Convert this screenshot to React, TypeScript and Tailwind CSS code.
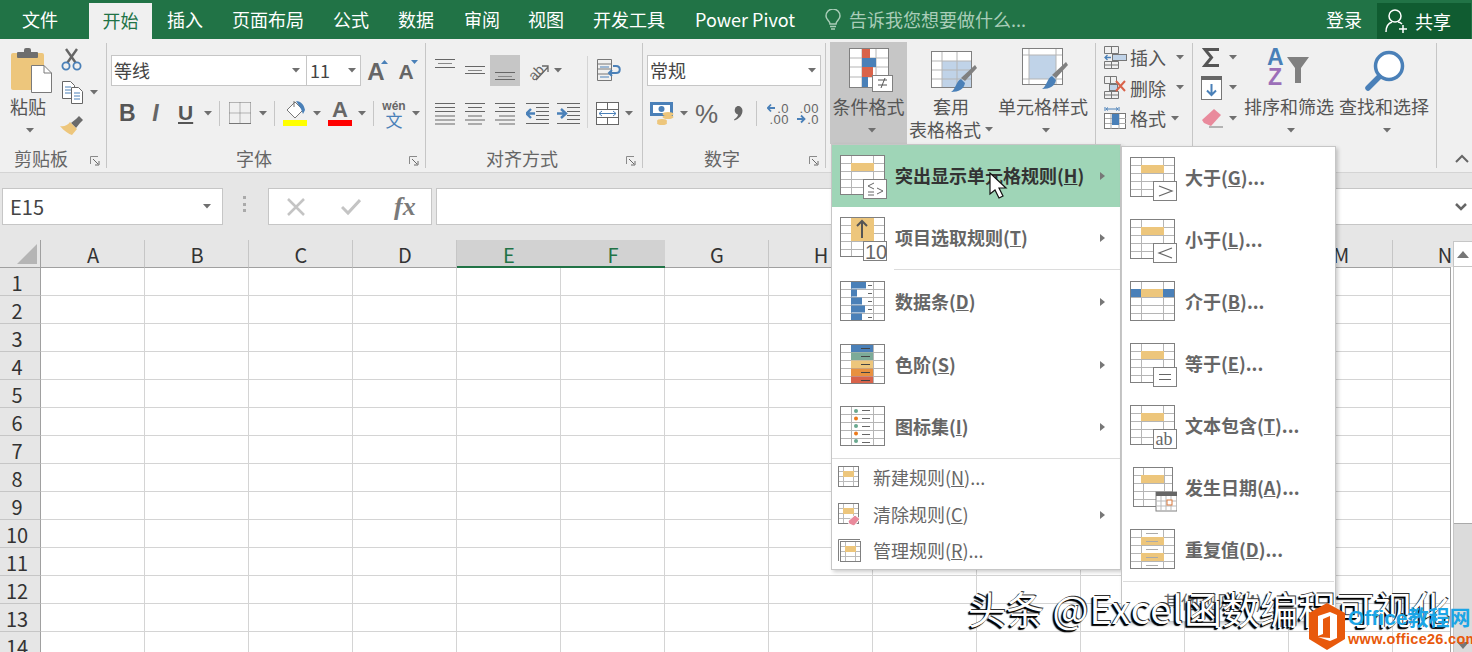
import React from "react";

const BLUE = "#4a80b8";
const YEL = "#edc67c";

function Caret({ className = "" }: { className?: string }) {
  return (
    <svg width="8" height="5" viewBox="0 0 8 5" className={`shrink-0 ${className}`}>
      <path d="M0 0h8L4 4.5z" fill="#6f6f6f" />
    </svg>
  );
}
function Launcher() {
  return (
    <svg width="10" height="10" viewBox="0 0 10 10">
      <path d="M.5 8V.5H8" fill="none" stroke="#8a8a8a" />
      <path d="M3 3l5 5M9 5v4H5" fill="none" stroke="#6a6a6a" />
    </svg>
  );
}
function Sep({ className = "" }: { className?: string }) {
  return <div className={`w-px h-[25px] bg-[#c6c6c6] shrink-0 ${className}`} />;
}

function Group({ w, label, children }: { w: string; label?: string; children: React.ReactNode }) {
  return (
    <div className={`${w} shrink-0 h-[125px] mt-[4px] border-r border-[#c6c6c6] flex flex-col`}>
      <div className="h-[107px] flex">{children}</div>
      {label && (
        <div className="h-[18px] -mt-px flex items-center">
          <div className="flex-1 text-center text-[18px] leading-[18px] text-[#666]">{label}</div>
          <div className="w-[24px] flex justify-end pr-[6px] pt-[5px]">
            <Launcher />
          </div>
        </div>
      )}
    </div>
  );
}

/* ---------- ribbon icons ---------- */
function PasteIcon() {
  return (
    <svg width="41" height="45" viewBox="0 0 41 45" className="ml-[11px] mt-[5px]">
      <rect x="0" y="5" width="33" height="37" rx="2" fill={YEL} />
      <rect x="6" y="4" width="21" height="6" rx="1" fill="#6e6e6e" />
      <rect x="13" y="0" width="7" height="6" rx="2" fill="#6e6e6e" />
      <path d="M20.5 17.5H33L40.5 25V44.5H20.5z" fill="#fff" stroke="#7a7a7a" />
      <path d="M33 17.5V25H40.5" fill="none" stroke="#7a7a7a" />
    </svg>
  );
}
function Scissors() {
  return (
    <svg width="21" height="23" viewBox="0 0 21 23">
      <path d="M5 1l9.5 13.5M16 1L6.5 14.5" stroke="#666" strokeWidth="2.4" fill="none" />
      <circle cx="5" cy="18" r="3.6" fill="none" stroke={BLUE} strokeWidth="1.8" />
      <circle cx="16" cy="18" r="3.6" fill="none" stroke={BLUE} strokeWidth="1.8" />
    </svg>
  );
}
function CopyIcon() {
  return (
    <svg width="21" height="23" viewBox="0 0 21 23">
      <path d="M.5.5h8l4 4v13H.5z" fill="#fff" stroke="#666" />
      <path d="M3 6h6M3 9h6M3 12h6" stroke={BLUE} />
      <path d="M9.5 6.5h7l4 4v12h-11z" fill="#fff" stroke="#666" />
      <path d="M12 12h6M12 15h6M12 18h6" stroke={BLUE} />
    </svg>
  );
}
function Brush() {
  return (
    <svg width="24" height="21" viewBox="0 0 24 21">
      <path d="M11 8l5-4 3-3 4 4-3 3-4 5z" fill="#6b6b6b" />
      <path d="M10 7l7 7-5 6c-3-1-8-4-12-9 4 1 8-1 10-4z" fill={YEL} />
    </svg>
  );
}
function GrowA({ up }: { up: boolean }) {
  return (
    <div className="relative w-[20px] h-[22px] flex items-end justify-center">
      <span className={`font-['Liberation_Sans'] font-bold text-[#666] leading-[20px] ${up ? "text-[24px]" : "text-[21px]"}`}>A</span>
      <svg width="7" height="4" viewBox="0 0 7 4" className="absolute right-[-2px] top-0">
        <path d={up ? "M0 4h7L3.5 0z" : "M0 0h7L3.5 4z"} fill={BLUE} />
      </svg>
    </div>
  );
}
function Borders() {
  return (
    <svg width="22" height="22" viewBox="0 0 22 22">
      <path d="M.5.5h21M.5.5v21M21.5.5v21M11 .5v21M.5 11h21" stroke="#777" strokeDasharray="1 1" fill="none" />
      <path d="M0 21.5h22" stroke="#777" />
    </svg>
  );
}
function FillIcon() {
  return (
    <svg width="24" height="26" viewBox="0 0 24 26">
      <path d="M4 10l8-8 8 8-8 8z" fill="#fff" stroke="#777" />
      <path d="M11 1v6" stroke="#777" />
      <path d="M13 1c4 0 8 3 9 9l-2 4-2-5z" fill={BLUE} />
      <rect x="0" y="20" width="24" height="6" fill="#ffff00" />
    </svg>
  );
}
function TableBig({ kind }: { kind: "cf" | "tb" | "cs" }) {
  if (kind === "cf")
    return (
      <svg width="45" height="45" viewBox="0 0 45 45">
        <rect x=".5" y=".5" width="39" height="39" fill="#fff" stroke="#808080" />
        <path d="M13 1v38M27 1v38M1 10h38M1 19h38M1 29h38" stroke="#b5b5b5" />
        <rect x="13" y="1" width="8" height="9" fill="#d9634a" />
        <rect x="13" y="10" width="14" height="9" fill={BLUE} />
        <rect x="13" y="19" width="11" height="10" fill="#d9634a" />
        <rect x="13" y="29" width="6" height="10" fill={BLUE} />
        <rect x="23.5" y="27.5" width="20" height="16" fill="#fff" stroke="#808080" />
        <path d="M29 32h9M29 37h9M36 30l-4 10" stroke="#555" fill="none" />
      </svg>
    );
  if (kind === "tb")
    return (
      <svg width="46" height="42" viewBox="0 0 46 42">
        <rect x=".5" y=".5" width="40" height="36" fill="#fff" stroke="#808080" />
        <rect x="11" y="10" width="29" height="26" fill="#c0d3e8" />
        <path d="M11 1v35M26 1v35M1 10h39M1 19h39M1 28h39" stroke="#b5b5b5" />
        <path d="M44 14l2 3-12 13-4-3z" fill="#808080" />
        <path d="M30 28l4 4c-1 6-6 9-14 9 5-3 5-11 10-13z" fill={BLUE} />
      </svg>
    );
  return (
    <svg width="46" height="42" viewBox="0 0 46 42">
      <rect x=".5" y=".5" width="40" height="36" fill="#fff" stroke="#808080" />
      <rect x="7" y="7" width="27" height="24" fill="#c0d3e8" />
      <path d="M7 1v35M34 1v35M1 7h39M1 31h39" stroke="#b5b5b5" />
      <path d="M44 14l2 3-12 13-4-3z" fill="#808080" />
      <path d="M30 28l4 4c-1 6-6 9-14 9 5-3 5-11 10-13z" fill={BLUE} />
    </svg>
  );
}
function InsertIcon() {
  return (
    <svg width="23" height="23" viewBox="0 0 23 23">
      <path d="M.5.5h14v7H.5zM7.5.5v7M.5 15.5h14v7H.5zM7.5 15.5v7M.5 19h14" fill="none" stroke="#777" />
      <rect x="8.5" y="8.5" width="14" height="6" fill="#c0d3e8" stroke="#777" />
      <path d="M7 11.5H1M3.5 9L1 11.5 3.5 14" stroke={BLUE} fill="none" strokeWidth="1.3" />
    </svg>
  );
}
function DeleteIcon() {
  return (
    <svg width="23" height="23" viewBox="0 0 23 23">
      <path d="M.5.5h12v7H.5zM6.5.5v7M.5 15.5h14v7H.5zM7.5 15.5v7M.5 19h14" fill="none" stroke="#777" />
      <rect x="5.5" y="8.5" width="8" height="6" fill="#c0d3e8" stroke="#777" />
      <path d="M12 5l9 10M21 5l-9 10" stroke="#d9634a" strokeWidth="2" />
    </svg>
  );
}
function FormatIcon() {
  return (
    <svg width="23" height="24" viewBox="0 0 23 24">
      <path d="M1 1v4M15 1v4M3 3h10M4 1.5L2 3l2 1.5M12 1.5L14 3l-2 1.5" fill="none" stroke={BLUE} />
      <rect x=".5" y="7.5" width="21" height="15" fill="#fff" stroke="#777" />
      <path d="M7 8v15M15 8v15M1 12.5h21M1 17.5h21" stroke="#aaa" />
      <rect x="8" y="8" width="7" height="11" fill={BLUE} />
    </svg>
  );
}
function SigmaIcon() {
  return (
    <svg width="18" height="19" viewBox="0 0 18 19">
      <path d="M17 1.500H3l6.500 8L3 17.500h14" fill="none" stroke="#555" strokeWidth="3" />
    </svg>
  );
}
function FillDown() {
  return (
    <svg width="21" height="24" viewBox="0 0 21 24">
      <rect x=".5" y=".5" width="20" height="23" fill="#fff" stroke="#777" />
      <rect x="0" y="0" width="21" height="4" fill="#666" />
      <path d="M10.5 8v11M6 14.5l4.5 4.5 4.5-4.5" fill="none" stroke={BLUE} strokeWidth="2" />
    </svg>
  );
}
function Eraser() {
  return (
    <svg width="22" height="20" viewBox="0 0 22 20">
      <path d="M13 1l7 6-10 11-7-3-2-3z" fill="#e98a9c" />
      <path d="M8 19h14" stroke="#777" />
    </svg>
  );
}
function SortIcon() {
  return (
    <svg width="44" height="40" viewBox="0 0 44 40">
      <text x="0" y="19" fontSize="23" fontWeight="700" fill={BLUE} fontFamily="Liberation Sans">A</text>
      <text x="1" y="39" fontSize="23" fontWeight="700" fill="#9c6fb8" fontFamily="Liberation Sans">Z</text>
      <path d="M20 11h22l-8 11v15h-6V22z" fill="#808080" />
    </svg>
  );
}
function FindIcon() {
  return (
    <svg width="40" height="42" viewBox="0 0 40 42">
      <circle cx="24" cy="16" r="13.500" fill="#fff" stroke={BLUE} strokeWidth="3.500" />
      <path d="M14 27L3 38" stroke={BLUE} strokeWidth="5.500" strokeLinecap="round" />
    </svg>
  );
}
function AlignV({ ys }: { ys: number[] }) {
  return (
    <svg width="20" height="31" viewBox="0 0 20 31">
      {ys.map((y) => (
        <path key={y} d={`M0 ${y}.5h20`} stroke="#666" />
      ))}
      <path d={`M3 ${ys[0] + 4}.5h14`} stroke="#888" />
    </svg>
  );
}
function AlignH({ xs }: { xs: [number, number][] }) {
  return (
    <svg width="20" height="22" viewBox="0 0 20 22">
      {xs.map(([a, b], i) => (
        <path key={i} d={`M${a} ${i * 4 + 0.5 + (i > 2 ? 0.5 : 0)}H${b}`} stroke="#666" />
      ))}
    </svg>
  );
}
function Indent({ right }: { right: boolean }) {
  return (
    <svg width="23" height="22" viewBox="0 0 23 22">
      <path d="M0 .5h23M10 4.500h13M10 8.500h13M10 12.500h13M10 16.500h13M0 20.500h23" stroke="#666" />
      {right ? (
        <path d="M0 10.500h7M4 6l5 4.500L4 15" fill="none" stroke={BLUE} strokeWidth="2.400" />
      ) : (
        <path d="M9 10.500H2M5 6L0.500 10.500 5 15" fill="none" stroke={BLUE} strokeWidth="2.400" />
      )}
    </svg>
  );
}
function Orientation() {
  return (
    <svg width="21" height="20" viewBox="0 0 21 20">
      <text x="-1" y="16" fontSize="14" fill="#666" fontFamily="Liberation Sans" transform="rotate(-45 8 10)">ab</text>
      <path d="M8 19L20 6M14 5h6v6" fill="none" stroke="#666" strokeWidth="1.300" />
    </svg>
  );
}
function WrapIcon() {
  return (
    <svg width="24" height="22" viewBox="0 0 24 22">
      <path d="M.5.5h14v21H.5zM.5 5h14M.5 10h14M.5 15h14" fill="none" stroke="#777" />
      <path d="M3 8h9M3 18h9" stroke={BLUE} />
      <path d="M16 7h3c5 0 5 7 0 7h-7M15 11l-3 3 3 3" fill="none" stroke={BLUE} strokeWidth="2" />
    </svg>
  );
}
function MergeIcon() {
  return (
    <svg width="23" height="23" viewBox="0 0 23 23">
      <rect x=".5" y=".5" width="22" height="22" fill="#fff" stroke="#666" />
      <path d="M1 7.500h21M1 15.500h21M11.500 1v6M11.500 16v6" stroke="#666" />
      <path d="M3 11.500h17M6 9l-3 2.500L6 14M17 9l3 2.500L17 14" fill="none" stroke={BLUE} />
    </svg>
  );
}
function Currency() {
  return (
    <svg width="24" height="23" viewBox="0 0 24 23">
      <rect x="0" y="0" width="23" height="14" fill={BLUE} />
      <rect x="3" y="3" width="17" height="8" fill="#fff" />
      <circle cx="11.500" cy="7" r="3" fill={BLUE} />
      <ellipse cx="18" cy="12" rx="5.500" ry="2" fill={YEL} />
      <ellipse cx="18" cy="15" rx="5.500" ry="2" fill={YEL} />
      <ellipse cx="12" cy="19" rx="5" ry="2" fill={YEL} />
      <ellipse cx="12" cy="21" rx="5" ry="2" fill={YEL} />
    </svg>
  );
}
function CommaIcon() {
  return (
    <svg width="10" height="15" viewBox="0 0 10 15">
      <path d="M4.500 0a4.500 4.500 0 0 1 5 4.500c0 4.500-3.500 8.500-8 10l-.5-1c2.500-1.500 4-3.500 4-5A4.500 4.500 0 0 1 4.500 0z" fill="#666" />
    </svg>
  );
}
function DecIcon({ inc }: { inc: boolean }) {
  const arrow = inc ? (
    <path d="M1 5h7M4 1.500L.8 5 4 8.500" fill="none" stroke={BLUE} strokeWidth="1.800" />
  ) : (
    <path d="M0 5h7M4 1.500L7.500 5 4 8.500" fill="none" stroke={BLUE} strokeWidth="1.800" />
  );
  return inc ? (
    <div className="w-[24px] h-[22px] flex flex-col text-[13px] leading-[11px] text-[#666] font-['Liberation_Sans'] tracking-[0.5px]">
      <div className="flex items-center justify-end gap-[1px]">
        <svg width="9" height="10" viewBox="0 0 9 10">{arrow}</svg>
        <span>.0</span>
      </div>
      <div className="text-right">.00</div>
    </div>
  ) : (
    <div className="w-[24px] h-[22px] flex flex-col text-[13px] leading-[11px] text-[#666] font-['Liberation_Sans'] tracking-[0.5px]">
      <div className="text-right">.00</div>
      <div className="flex items-center justify-end gap-[1px]">
        <svg width="9" height="10" viewBox="0 0 9 10">{arrow}</svg>
        <span>.0</span>
      </div>
    </div>
  );
}

/* ---------- conditional-format menu icons ---------- */
function CfIcon({ x = 0, w = 45, cols = [11, 33], children, badge }: { x?: number; w?: number; cols?: number[]; children?: React.ReactNode; badge?: React.ReactNode }) {
  const y = 3;
  return (
    <svg width="47" height="48" viewBox="0 0 47 48" className="shrink-0">
      <rect x={x + 0.5} y={y + 0.5} width={w - 1} height="39" fill="#fff" />
      {cols.map((c) => (
        <path key={c} d={`M${x + c}.5 ${y}v40`} stroke="#b5b5b5" />
      ))}
      {[8, 16, 24, 32].map((r) => (
        <path key={r} d={`M${x} ${y + r}.5h${w}`} stroke="#b5b5b5" />
      ))}
      <g transform={`translate(${x} ${y})`}>{children}</g>
      <rect x={x + 0.5} y={y + 0.5} width={w - 1} height="39" fill="none" stroke="#808080" />
      {badge}
    </svg>
  );
}
function Badge({ children }: { children?: React.ReactNode }) {
  return (
    <g>
      <rect x="23.500" y="27.500" width="23" height="19" fill="#fff" stroke="#808080" />
      {children}
    </g>
  );
}
const Y = ({ y = 8, h = 8, x = 11, w = 23 }: { y?: number; h?: number; x?: number; w?: number }) => <rect x={x} y={y} width={w} height={h} fill={YEL} />;

function DataBars() {
  const ws = [15, 6, 11, 14, 11];
  return (
    <CfIcon>
      {ws.map((w, i) => (
        <React.Fragment key={i}>
          <rect x="11" y={i * 8 + 0.5} width={w} height="7" fill={BLUE} />
          <path d={`M28 ${i * 8 + 4}.5h4`} stroke="#666" />
        </React.Fragment>
      ))}
    </CfIcon>
  );
}
function ColorScale() {
  const cs = [BLUE, "#7cab98", YEL, "#e8913f", "#d9634a"];
  return (
    <CfIcon>
      {cs.map((c, i) => (
        <React.Fragment key={i}>
          <rect x="11" y={i * 8 + 0.5} width="22" height="7.500" fill={c} />
          <path d={`M21 ${i * 8 + 4}.5h9`} stroke="#444" />
        </React.Fragment>
      ))}
    </CfIcon>
  );
}
function IconSets() {
  const cs = ["#6aa88f", "#ec7a1c", "#6aa88f", "#ec7a1c", "#6aa88f"];
  return (
    <CfIcon>
      {cs.map((c, i) => (
        <React.Fragment key={i}>
          <circle cx="16" cy={i * 7.500 + 5} r="2" fill={c} />
          <path d={`M22 ${i * 8 + 4}.5h8`} stroke="#666" />
        </React.Fragment>
      ))}
    </CfIcon>
  );
}
function SmallCf({ kind }: { kind: "new" | "clear" | "manage" }) {
  return (
    <svg width="23" height="23" viewBox="0 0 23 23" className="shrink-0">
      {kind === "manage" && <path d="M.5 22V.5H22" fill="none" stroke="#808080" />}
      <g transform={kind === "manage" ? "translate(2 2)" : ""}>
        <rect x=".5" y=".5" width="20" height="20" fill="#fff" stroke="#808080" />
        <path d="M5.500 1v19M15.500 1v19M1 5.500h19M1 10.500h19M1 15.500h19" stroke="#bbb" />
        <rect x="5" y="5" width="11" height="6" fill={YEL} />
      </g>
      {kind === "clear" && <path d="M17 12l5 4-6 7-5-2-1-3z" fill="#e98a9c" stroke="#fff" />}
    </svg>
  );
}

function MenuRow({ icon, label, hot, arrow, height }: { icon: React.ReactNode; label: React.ReactNode; hot?: boolean; arrow?: boolean; height: string }) {
  return (
    <div className={`${height} flex items-center ${hot ? "bg-[#9fd5b7] text-[#333]" : "text-[#666]"}`}>
      <div className="ml-[8px] w-[47px] shrink-0 flex">{icon}</div>
      <div className="ml-[8px] -mt-[2px] flex-1 text-[18px] font-bold leading-[24px] whitespace-nowrap">{label}</div>
      {arrow && (
        <svg width="5" height="8" viewBox="0 0 5 8" className="mr-[15px]">
          <path d="M0 0l5 4-5 4z" fill="#777" />
        </svg>
      )}
    </div>
  );
}
function SmallRow({ kind, label, arrow, height }: { kind: "new" | "clear" | "manage"; label: React.ReactNode; arrow?: boolean; height: string }) {
  return (
    <div className={`${height} flex items-center text-[#666]`}>
      <div className="ml-[6px] w-[23px] shrink-0 flex">
        <SmallCf kind={kind} />
      </div>
      <div className="ml-[12px] -mt-[2px] flex-1 text-[18px] leading-[24px] whitespace-nowrap">{label}</div>
      {arrow && (
        <svg width="5" height="8" viewBox="0 0 5 8" className="mr-[15px]">
          <path d="M0 0l5 4-5 4z" fill="#777" />
        </svg>
      )}
    </div>
  );
}
function SubRow({ icon, label }: { icon: React.ReactNode; label: React.ReactNode }) {
  return <MenuRow icon={icon} label={label} height="h-[62px]" />;
}

const COLS = ["A", "B", "C", "D", "E", "F", "G", "H", "I", "J", "K", "L", "M", "N"];
const ROWS = Array.from({ length: 14 }, (_, i) => i + 1);

export default function App() {
  return (
    <div className="relative w-[1472px] h-[652px] overflow-hidden bg-white font-['Noto_Sans_CJK_SC','Noto_Sans',sans-serif] text-[#555]">
      {/* Title tabs */}
      <div className="h-[39px] bg-[#217346] flex items-end text-white text-[18px]">
        <div className="ml-[22px] w-[36px] h-[39px] leading-[39px]">文件</div>
        <div className="ml-[31px] w-[63px] h-[36px] leading-[34px] text-center bg-[#f0f0f0] text-[#217346]">开始</div>
        <div className="ml-[15px] h-[39px] leading-[39px]">插入</div>
        <div className="ml-[29px] h-[39px] leading-[39px]">页面布局</div>
        <div className="ml-[29px] h-[39px] leading-[39px]">公式</div>
        <div className="ml-[29px] h-[39px] leading-[39px]">数据</div>
        <div className="ml-[30px] h-[39px] leading-[39px]">审阅</div>
        <div className="ml-[28px] h-[39px] leading-[39px]">视图</div>
        <div className="ml-[29px] h-[39px] leading-[39px]">开发工具</div>
        <div className="ml-[30px] w-[100px] h-[39px] leading-[39px] whitespace-nowrap">Power Pivot</div>
        <div className="ml-[30px] h-[39px] flex items-center">
          <svg width="16" height="22" viewBox="0 0 16 22">
            <path d="M5 15c0-3-4-4-4-8a7 7 0 0 1 14 0c0 4-4 5-4 8z" fill="none" stroke="#a9cdb8" strokeWidth="1.500" />
            <path d="M5 17.500h6M6 20h4" stroke="#a9cdb8" strokeWidth="1.500" />
          </svg>
        </div>
        <div className="ml-[8px] w-[176px] h-[39px] leading-[39px] text-[#a9cdb8] whitespace-nowrap">告诉我您想要做什么...</div>
        <div className="ml-[301px] h-[39px] leading-[39px]">登录</div>
        <div className="ml-[15px] w-[94px] h-[36px] bg-[#105c31] flex items-center">
          <svg width="24" height="25" viewBox="0 0 24 25" className="ml-[8px]">
            <circle cx="10" cy="7" r="6" fill="none" stroke="#fff" strokeWidth="1.500" />
            <path d="M1 23c0-6 3-9 6-10M13 13c1 0 3 1 4 2M18 16v8M14 20h8" fill="none" stroke="#fff" strokeWidth="1.500" />
          </svg>
          <span className="ml-[6px] leading-[30px]">共享</span>
        </div>
      </div>

      {/* Ribbon */}
      <div className="h-[134px] bg-[#f0f0f0] border-b border-[#d4d4d4] flex items-start">
        <Group w="w-[107px]" label="剪贴板">
          <div className="w-[56px] flex flex-col items-start">
            <PasteIcon />
            <div className="ml-[10px] mt-[2px] text-[18px] leading-[22px]">粘贴</div>
            <Caret className="ml-[26px] mt-[11px]" />
          </div>
          <div className="flex flex-col items-start">
            <div className="ml-[5px] mt-[5px]"><Scissors /></div>
            <div className="mt-[10px] ml-[6px] flex items-center">
              <CopyIcon />
              <Caret className="ml-[7px]" />
            </div>
            <div className="ml-[4px] mt-[11px]"><Brush /></div>
          </div>
        </Group>

        <Group w="w-[319px]" label="字体">
          <div className="flex flex-col">
            <div className="mt-[12px] ml-[4px] flex items-center">
              <div className="w-[196px] h-[31px] bg-white border border-[#c6c6c6] flex items-center justify-between pl-[2px] pr-[6px] text-[18px] text-[#444]">
                <span>等线</span>
                <Caret />
              </div>
              <div className="w-[55px] h-[31px] bg-white border border-[#c6c6c6] -ml-px flex items-center justify-between pl-[3px] pr-[4px] text-[18px] text-[#444]">
                <span>11</span>
                <Caret />
              </div>
              <div className="ml-[5px]"><GrowA up /></div>
              <div className="ml-[10px]"><GrowA up={false} /></div>
            </div>
            <div className="mt-[14px] h-[26px] flex items-center font-['Liberation_Sans'] text-[#555]">
              <div className="ml-[12px] w-[14px] text-center text-[23px] leading-[24px] font-bold">B</div>
              <div className="ml-[17px] w-[11px] text-center text-[23px] leading-[24px] italic font-bold text-[#666]">I</div>
              <div className="ml-[17px] w-[14px] text-center text-[21px] leading-[24px] font-bold underline underline-offset-2">U</div>
              <Caret className="ml-[12px]" />
              <Sep className="ml-[7px]" />
              <div className="ml-[9px]"><Borders /></div>
              <Caret className="ml-[8px]" />
              <Sep className="ml-[7px]" />
              <div className="ml-[8px]"><FillIcon /></div>
              <Caret className="ml-[6px]" />
              <div className="ml-[7px] w-[24px] h-[26px] flex flex-col items-center">
                <span className="text-[22px] leading-[20px] font-bold text-[#666]">A</span>
                <span className="w-[24px] h-[6px] bg-[#ff0000]" />
              </div>
              <Caret className="ml-[6px]" />
              <Sep className="ml-[7px]" />
              <div className="ml-[10px] w-[20px] h-[26px] flex flex-col items-center">
                <span className="text-[12px] leading-[12px] font-bold text-[#666]">wén</span>
                <span className="text-[17px] leading-[16px] text-[#4a80b8] font-['Noto_Sans_CJK_SC']">文</span>
              </div>
              <Caret className="ml-[8px]" />
            </div>
          </div>
        </Group>

        <Group w="w-[217px]" label="对齐方式">
          <div className="w-[161px] flex flex-col">
            <div className="mt-[12px] h-[31px] flex items-center">
              <div className="ml-[9px]"><AlignV ys={[4, 12]} /></div>
              <div className="ml-[10px]"><AlignV ys={[11, 18]} /></div>
              <div className="ml-[5px] w-[30px] h-[31px] bg-[#c6c6c6] flex justify-center"><AlignV ys={[17, 24]} /></div>
              <div className="ml-[8px]"><Orientation /></div>
              <Caret className="ml-[5px]" />
            </div>
            <div className="mt-[17px] h-[22px] flex items-center">
              <div className="ml-[9px]"><AlignH xs={[[0, 20], [0, 20], [0, 20], [0, 20], [0, 20], [0, 20]]} /></div>
              <div className="ml-[10px]"><AlignH xs={[[0, 20], [3, 17], [0, 20], [3, 17], [0, 20], [3, 17]]} /></div>
              <div className="ml-[10px]"><AlignH xs={[[0, 20], [4, 20], [0, 20], [4, 20], [0, 20], [4, 20]]} /></div>
              <div className="ml-[11px]"><Indent right={false} /></div>
              <div className="ml-[8px]"><Indent right /></div>
            </div>
          </div>
          <div className="w-px h-[72px] mt-[13px] bg-[#d4d4d4]" />
          <div className="flex flex-col">
            <div className="ml-[9px] mt-[16px]"><WrapIcon /></div>
            <div className="ml-[8px] mt-[21px] flex items-center">
              <MergeIcon />
              <Caret className="ml-[6px]" />
            </div>
          </div>
        </Group>

        <Group w="w-[183px]" label="数字">
          <div className="flex flex-col">
            <div className="mt-[12px] ml-[4px] w-[174px] h-[31px] bg-white border border-[#c6c6c6] flex items-center justify-between pl-[2px] pr-[4px] text-[18px] text-[#444]">
              <span>常规</span>
              <Caret />
            </div>
            <div className="mt-[16px] h-[23px] flex items-center">
              <div className="ml-[7px]"><Currency /></div>
              <Caret className="ml-[6px]" />
              <div className="ml-[7px] w-[22px] text-center text-[26px] leading-[24px] font-['Liberation_Sans'] text-[#666]">%</div>
              <div className="ml-[16px]"><CommaIcon /></div>
              <Sep className="ml-[13px]" />
              <div className="ml-[8px]"><DecIcon inc /></div>
              <div className="ml-[6px]"><DecIcon inc={false} /></div>
            </div>
          </div>
        </Group>

        <Group w="w-[270px]">
          <div className="ml-[4px] -mt-px w-[77px] h-[102px] bg-[#c6c6c6] flex flex-col items-center">
            <div className="mt-[6px] ml-[6px]"><TableBig kind="cf" /></div>
            <div className="mt-[3px] text-[18px] leading-[20px] whitespace-nowrap">条件格式</div>
            <Caret className="mt-[12px] ml-[6px]" />
          </div>
          <div className="w-[90px] flex flex-col items-start">
            <div className="mt-[8px] ml-[24px]"><TableBig kind="tb" /></div>
            <div className="ml-[26px] mt-[3px] text-[18px] leading-[20px]">套用</div>
            <div className="ml-[2px] mt-[3px] flex items-center text-[18px] leading-[20px] whitespace-nowrap">
              表格格式
              <Caret className="ml-[4px]" />
            </div>
          </div>
          <div className="w-[98px] flex flex-col items-start">
            <div className="mt-[5px] ml-[25px]"><TableBig kind="cs" /></div>
            <div className="ml-[1px] mt-[6px] text-[18px] leading-[20px] whitespace-nowrap">单元格样式</div>
            <Caret className="ml-[45px] mt-[12px]" />
          </div>
        </Group>

        <Group w="w-[97px]">
          <div className="flex flex-col -mt-px text-[18px]">
            <div className="h-[30.500px] flex items-center">
              <div className="ml-[8px]"><InsertIcon /></div>
              <span className="ml-[3px] w-[36px] leading-[22px]">插入</span>
              <Caret className="ml-[10px]" />
            </div>
            <div className="h-[30.500px] flex items-center">
              <div className="ml-[8px]"><DeleteIcon /></div>
              <span className="ml-[3px] w-[36px] leading-[22px]">删除</span>
              <Caret className="ml-[10px]" />
            </div>
            <div className="h-[30.500px] flex items-center">
              <div className="ml-[8px]"><FormatIcon /></div>
              <span className="ml-[3px] w-[36px] leading-[22px]">格式</span>
              <Caret className="ml-[5px]" />
            </div>
          </div>
        </Group>

        <Group w="w-[244px]">
          <div className="w-[47px] -mt-px flex flex-col">
            <div className="h-[30.500px] flex items-center">
              <div className="ml-[9px]"><SigmaIcon /></div>
              <Caret className="ml-[9px]" />
            </div>
            <div className="h-[30.500px] flex items-center">
              <div className="ml-[8px]"><FillDown /></div>
              <Caret className="ml-[7px]" />
            </div>
            <div className="h-[30.500px] flex items-center">
              <div className="ml-[8px]"><Eraser /></div>
              <Caret className="ml-[6px]" />
            </div>
          </div>
          <div className="w-[99px] flex flex-col items-start">
            <div className="mt-[3px] ml-[27px]"><SortIcon /></div>
            <div className="ml-[4px] mt-[10px] text-[18px] leading-[20px] whitespace-nowrap">排序和筛选</div>
            <Caret className="ml-[47px] mt-[12px]" />
          </div>
          <div className="w-[97px] flex flex-col items-start">
            <div className="mt-[7px] ml-[26px]"><FindIcon /></div>
            <div className="ml-[0px] mt-[4px] text-[18px] leading-[20px] whitespace-nowrap">查找和选择</div>
            <Caret className="ml-[44px] mt-[12px]" />
          </div>
        </Group>

        <div className="flex-1 h-[125px] flex items-end justify-end pr-[3px] pb-[1px]">
          <svg width="14" height="9" viewBox="0 0 14 9">
            <path d="M1 8l6-6 6 6" fill="none" stroke="#666" strokeWidth="2" />
          </svg>
        </div>
      </div>

      {/* Formula bar */}
      <div className="h-[67px] bg-[#e6e6e6] flex items-start">
        <div className="ml-[2px] mt-[15px] w-[221px] h-[37px] bg-white border border-[#c6c6c6] flex items-center justify-between pl-[7px] pr-[11px] text-[20px] text-[#444]">
          <span>E15</span>
          <Caret />
        </div>
        <div className="ml-[20px] mt-[23px] w-[3px] h-[16px] flex flex-col justify-between">
          <span className="h-[3px] bg-[#aaa]" />
          <span className="h-[3px] bg-[#aaa]" />
          <span className="h-[3px] bg-[#aaa]" />
        </div>
        <div className="ml-[22px] mt-[15px] w-[164px] h-[37px] bg-white border border-[#c6c6c6] flex items-center">
          <svg width="18" height="18" viewBox="0 0 18 18" className="ml-[18px]">
            <path d="M1 1l16 16M17 1L1 17" stroke="#c4c4c4" strokeWidth="2.500" />
          </svg>
          <svg width="20" height="18" viewBox="0 0 20 18" className="ml-[36px]">
            <path d="M1 9l6 6L19 2" fill="none" stroke="#c4c4c4" strokeWidth="3" />
          </svg>
          <span className="ml-[33px] text-[26px] leading-[30px] font-['Liberation_Serif'] italic font-bold text-[#7a7a7a]">fx</span>
        </div>
        <div className="ml-[4px] mt-[15px] flex-1 h-[37px] bg-white border-y border-l border-[#c6c6c6] flex items-center justify-end pr-[5px]">
          <svg width="12" height="8" viewBox="0 0 12 8">
            <path d="M1 1l5 5 5-5" fill="none" stroke="#666" strokeWidth="2.500" />
          </svg>
        </div>
      </div>

      {/* Sheet */}
      <div className="grid grid-cols-[41px_repeat(14,104px)] font-['Noto_Sans_CJK_SC'] text-[20px] text-[#333]">
        <div className="h-[28px] bg-[#e6e6e6] border-r border-b border-[#a0a0a0] flex items-end justify-end pr-[3px] pb-[3px]">
          <svg width="20" height="20" viewBox="0 0 20 20">
            <path d="M20 0v20H0z" fill="#b5b5b5" />
          </svg>
        </div>
        {COLS.map((c) => {
          const sel = c === "E" || c === "F";
          return (
            <div
              key={c}
              className={
                sel
                  ? "h-[28px] bg-[#d2d2d2] border-b-2 border-[#217346] text-[#217346] text-center leading-[29px]"
                  : "h-[28px] bg-[#e6e6e6] border-r border-b border-r-[#c6c6c6] border-b-[#a0a0a0] text-center leading-[29px] pl-[1px]"
              }
            >
              {c}
            </div>
          );
        })}
        {ROWS.map((r) => (
          <React.Fragment key={r}>
            <div className="h-[28px] bg-[#e6e6e6] border-r border-r-[#a0a0a0] border-b border-b-[#c6c6c6] text-center leading-[30px] pr-[6px]">{r}</div>
            {COLS.map((c) => (
              <div key={c} className="h-[28px] border-r border-b border-[#d4d4d4]" />
            ))}
          </React.Fragment>
        ))}
      </div>

      {/* Vertical scrollbar */}
      <div className="absolute left-[1450px] top-[267px] w-[3px] h-[385px] bg-white border-l border-[#a0a0a0]" />
      <div className="absolute left-[1453px] top-[241px] w-[19px] h-[411px] bg-[#dbdbdb] border-l border-[#c6c6c6] flex flex-col">
        <div className="h-[26px] bg-white border-t border-b border-[#c6c6c6] flex items-center justify-center">
          <svg width="12" height="7" viewBox="0 0 12 7"><path d="M0 7h12L6 0z" fill="#777" /></svg>
        </div>
        <div className="h-[257px] bg-white border-b border-[#aaa]" />
        <div className="flex-1 flex items-end justify-center pb-[3px]">
          <svg width="12" height="7" viewBox="0 0 12 7"><path d="M0 0h12L6 7z" fill="#777" /></svg>
        </div>
      </div>

      {/* Conditional format menu */}
      <div className="absolute left-[831px] top-[144px] w-[290px] h-[426px] bg-white border border-[#c6c6c6] shadow-[2px_2px_4px_rgba(0,0,0,0.2)] flex flex-col">
        <MenuRow
          hot
          arrow
          height="h-[62px]"
          icon={
            <CfIcon badge={<Badge><path d="M34 31l-6 3 6 3M28 40h6M28 43h6M37 36l6 3-6 3" fill="none" stroke="#666" /></Badge>}>
              <Y />
            </CfIcon>
          }
          label={<>突出显示单元格规则(<u>H</u>)</>}
        />
        <MenuRow
          arrow
          height="h-[62px]"
          icon={
            <CfIcon badge={<Badge><text x="25" y="45" fontSize="20" fill="#666" fontFamily="Liberation Sans">10</text></Badge>}>
              <Y y={0} h={24} />
              <path d="M22 21V4M17 9l5-5 5 5" fill="none" stroke="#555" strokeWidth="2" />
            </CfIcon>
          }
          label={<>项目选取规则(<u>T</u>)</>}
        />
        <div className="h-px ml-[62px] bg-[#dcdcdc]" />
        <MenuRow arrow height="h-[64px]" icon={<DataBars />} label={<>数据条(<u>D</u>)</>} />
        <MenuRow arrow height="h-[62px]" icon={<ColorScale />} label={<>色阶(<u>S</u>)</>} />
        <MenuRow arrow height="h-[62px]" icon={<IconSets />} label={<>图标集(<u>I</u>)</>} />
        <div className="h-px bg-[#dcdcdc]" />
        <SmallRow kind="new" height="h-[37px]" label={<>新建规则(<u>N</u>)...</>} />
        <SmallRow kind="clear" arrow height="h-[37px]" label={<>清除规则(<u>C</u>)</>} />
        <SmallRow kind="manage" height="h-[35px]" label={<>管理规则(<u>R</u>)...</>} />
      </div>

      {/* Highlight rules sub menu */}
      <div className="absolute left-[1121px] top-[146px] w-[215px] h-[476px] bg-white border border-[#c6c6c6] shadow-[2px_2px_4px_rgba(0,0,0,0.2)] flex flex-col">
        <SubRow icon={<CfIcon badge={<Badge><path d="M29 32l13 5-13 5" fill="none" stroke="#666" strokeWidth="1.200" /></Badge>}><Y /></CfIcon>} label={<>大于(<u>G</u>)...</>} />
        <SubRow icon={<CfIcon badge={<Badge><path d="M42 32l-13 5 13 5" fill="none" stroke="#666" strokeWidth="1.200" /></Badge>}><Y /></CfIcon>} label={<>小于(<u>L</u>)...</>} />
        <SubRow
          icon={
            <CfIcon>
              <Y />
              <rect x="0" y="8" width="11" height="8" fill={BLUE} />
              <rect x="33" y="8" width="12" height="8" fill={BLUE} />
            </CfIcon>
          }
          label={<>介于(<u>B</u>)...</>}
        />
        <SubRow icon={<CfIcon badge={<Badge><path d="M29 34.500h12M29 39.500h12" stroke="#666" /></Badge>}><Y /></CfIcon>} label={<>等于(<u>E</u>)...</>} />
        <SubRow icon={<CfIcon badge={<Badge><text x="25.500" y="43" fontSize="18" fill="#666" fontFamily="Liberation Serif">ab</text></Badge>}><Y /></CfIcon>} label={<>文本包含(<u>T</u>)...</>} />
        <SubRow
          icon={
            <CfIcon
              x={3}
              w={40}
              cols={[10, 31]}
              badge={
                <g>
                  <rect x="26" y="28" width="21" height="19" fill="#fff" stroke="#808080" />
                  <rect x="26" y="28" width="21" height="4" fill="#666" />
                  <path d="M31 32v15M36 32v15M41 32v15M26 37h21M26 42h21" stroke="#bbb" />
                  <rect x="37" y="36" width="5" height="5" fill="#fff" stroke="#d9793c" />
                </g>
              }
            >
              <Y x={8} w={23} />
            </CfIcon>
          }
          label={<>发生日期(<u>A</u>)...</>}
        />
        <SubRow
          icon={
            <CfIcon>
              <Y />
              <Y y={24} />
              {[4, 12, 20, 28, 36].map((y) => (
                <path key={y} d={`M16 ${y}.5h12`} stroke="#aaa" />
              ))}
            </CfIcon>
          }
          label={<>重复值(<u>D</u>)...</>}
        />
        <div className="h-px mx-[1px] bg-[#dcdcdc]" />
        <div className="h-[38px] pl-[41px] flex items-center text-[18px] text-[#666] whitespace-nowrap">其他规则(M)...</div>
      </div>

      {/* Mouse pointer */}
      <svg width="20" height="28" viewBox="0 0 20 28" className="absolute left-[989px] top-[172px]">
        <path d="M1 1v21l5-4 4 8 4-2-4-8h7z" fill="#fff" stroke="#111" strokeWidth="1.200" />
      </svg>

      {/* Watermark */}
      <div className="absolute left-[968px] top-[583px] h-[50px] text-[38px] leading-[50px] whitespace-nowrap font-['Noto_Sans_CJK_SC'] text-white [text-shadow:-1px_1px_0_#000,-2px_2px_1px_#000,1px_-1px_0_#333]">
        <span>头条</span> <span className="tracking-[1px]">@Excel</span><span>函数编程可视化</span>
      </div>
      <svg width="38" height="50" viewBox="0 0 38 50" className="absolute left-[1308px] top-[603px]">
        <path d="M19 0l18 10v26L19 47 1 36V10z" fill="#e8590c" />
        <path d="M10 13l12-4 7 3v23l-7 3-12-4 12 1V13l-7 3v15l-5 2z" fill="#fff" />
      </svg>
      <div className="absolute left-[1348px] top-[605px] flex flex-col items-start font-['Liberation_Sans'] font-bold whitespace-nowrap">
        <span className="text-[21px] leading-[25px] text-[#1ba5e6] [font-family:'Liberation_Sans','Noto_Sans_CJK_SC',sans-serif]">Office教程网</span>
        <span className="text-[14.500px] leading-[18px] text-[#e8590c] tracking-[0.3px]">www.office26.com</span>
      </div>
    </div>
  );
}
